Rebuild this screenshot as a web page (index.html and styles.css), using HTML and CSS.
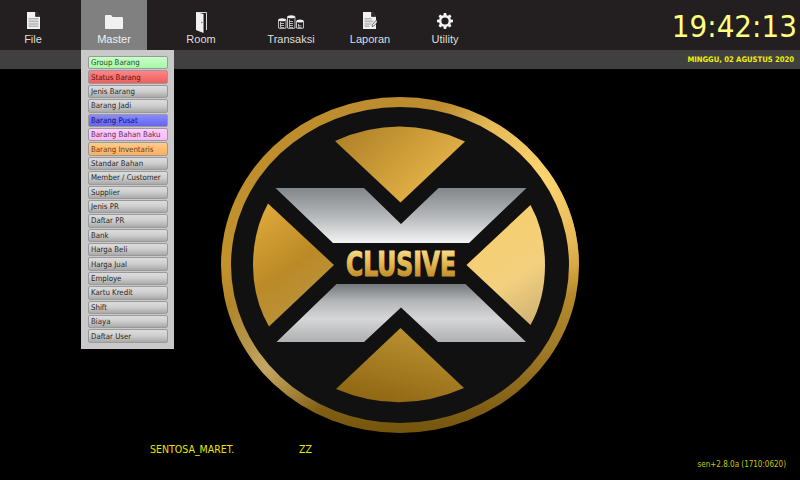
FILE: index.html
```html
<!DOCTYPE html>
<html lang="id">
<head>
<meta charset="utf-8">
<title>Xclusive</title>
<link rel="stylesheet" href="styles.css">
</head>
<body>
<div class="app">
  <header class="topbar">
    <nav class="nav">
      <a class="nav-item w-file">
        <div class="slot"><svg viewBox="0 0 13 17" width="13" height="17"><path class="ic" d="M0 0h8.500l4.500 4.500V17H0z"/><path class="cut" d="M8.500 0v4.500H13"/><path class="ln" d="M1.500 6h10v1.600h-10zM1.500 8.600h10v1.600h-10zM1.500 11.200h10v1.600h-10zM1.500 13.600h10v1.400h-10z"/></svg></div>
        <span>File</span>
      </a>
      <a class="nav-item w-master active">
        <div class="slot"><svg viewBox="0 0 18 14" width="18" height="14"><path class="ic" d="M0 1.200Q0 0 1 0h5l1.500 2H17q1 0 1 1v10q0 1-1 1H1q-1 0-1-1z"/></svg></div>
        <span>Master</span>
      </a>
      <a class="nav-item w-room">
        <div class="slot"><svg class="door" viewBox="0 0 11 21" width="11" height="21"><path class="frame" d="M.5.500h10v17.500"/><path class="ic" d="M0 0l7.500 2V21L0 18z"/><circle class="knob" cx="5.800" cy="10.500" r=".7"/></svg></div>
        <span>Room</span>
      </a>
      <a class="nav-item w-trans">
        <div class="slot"><svg viewBox="0 0 26 14.500" width="26" height="14.500"><g class="db"><path d="M.5 4.800v8.200q3.700 1.600 7.500 0V4.800"/><path d="M9.500 1.700v11.300q3.700 1.600 7.500 0V1.700"/><path d="M18.500 6v7q3.500 1.500 7 0V6"/></g><ellipse class="ic" cx="4.200" cy="4.800" rx="3.800" ry="1.500"/><ellipse class="ic" cx="13.200" cy="1.700" rx="3.800" ry="1.500"/><ellipse class="ic" cx="22" cy="6" rx="3.500" ry="1.500"/><path class="ln-w" d="M2.500 7v5.500h3.500M2.500 8.500h3.500M2.500 10.500h3.500M11.500 4.500v8h3.500M11.500 6.500h3.500M11.500 8.500h3.500M11.500 10.500h3.500M20.500 9v3.500h3M20.500 10.800h3"/></svg></div>
        <span>Transaksi</span>
      </a>
      <a class="nav-item w-lapor">
        <div class="slot"><svg viewBox="0 0 14 17" width="14" height="17"><path class="ic" d="M0 0h8.500l4.500 4.500V17H0z"/><path class="cut" d="M8.500 0v4.500H13"/><path class="ln" d="M1.500 6h7v1.600h-7zM1.500 8.600h9v1.600h-9zM1.500 11.200h7v1.600h-7zM1.500 13.600h5v1.400h-5z"/><path class="pencil" d="M14 7.500L9.500 12.500 9 14.500 11 14 14 10.500z"/></svg></div>
        <span>Laporan</span>
      </a>
      <a class="nav-item w-util">
        <div class="slot"><svg viewBox="0 0 20 20" width="16" height="16"><path class="gear" d="M8.500 0h3l.5 2.700 1.700.7 2.300-1.500 2.100 2.100-1.500 2.300.7 1.700 2.700.5v3l-2.700.5-.7 1.700 1.500 2.300-2.100 2.100-2.300-1.500-1.700.7-.5 2.700h-3l-.5-2.700-1.700-.7-2.300 1.500-2.100-2.100 1.500-2.300-.7-1.700L0 11.500v-3l2.700-.5.7-1.700-1.500-2.300L4 1.900l2.300 1.500 1.700-.7zM10 5.500a4.500 4.500 0 1 0 0 9 4.500 4.500 0 0 0 0-9z"/></svg></div>
        <span>Utility</span>
      </a>
    </nav>
    <div class="clock">19:42:13</div>
  </header>
  <div class="subbar"><span class="date">MINGGU, 02 AGUSTUS 2020</span></div>
  <main class="stage">
    <svg class="logo" viewBox="0 0 360 338" width="360" height="338">
      <defs>
        <linearGradient id="ring" x1="0" y1="0" x2="0" y2="1">
          <stop offset="0" stop-color="#bc8c2e"/>
          <stop offset=".5" stop-color="#c2922c"/>
          <stop offset=".75" stop-color="#a07a28"/>
          <stop offset="1" stop-color="#74550c"/>
        </linearGradient>
        <radialGradient id="hiR" gradientUnits="userSpaceOnUse" cx="315" cy="85" r="120">
          <stop offset="0" stop-color="#ffd873" stop-opacity="1"/>
          <stop offset=".6" stop-color="#f5cb68" stop-opacity=".7"/>
          <stop offset="1" stop-color="#f5cb68" stop-opacity="0"/>
        </radialGradient>
        <radialGradient id="hiL" gradientUnits="userSpaceOnUse" cx="45" cy="270" r="70">
          <stop offset="0" stop-color="#c9ad6a" stop-opacity=".9"/>
          <stop offset="1" stop-color="#c9ad6a" stop-opacity="0"/>
        </radialGradient>
        <linearGradient id="wTop" gradientUnits="userSpaceOnUse" x1="130" y1="30" x2="210" y2="115">
          <stop offset="0" stop-color="#b08228"/><stop offset="1" stop-color="#ecb94b"/>
        </linearGradient>
        <linearGradient id="wLeft" gradientUnits="userSpaceOnUse" x1="30" y1="110" x2="115" y2="230">
          <stop offset="0" stop-color="#e3ac3d"/><stop offset=".5" stop-color="#bb8a26"/><stop offset="1" stop-color="#b89a4c"/>
        </linearGradient>
        <linearGradient id="wRight" gradientUnits="userSpaceOnUse" x1="250" y1="110" x2="325" y2="230">
          <stop offset="0" stop-color="#f6cd65"/><stop offset=".6" stop-color="#f3d07f"/><stop offset="1" stop-color="#c8ae70"/>
        </linearGradient>
        <linearGradient id="wBot" gradientUnits="userSpaceOnUse" x1="190" y1="235" x2="170" y2="312">
          <stop offset="0" stop-color="#b98f30"/><stop offset="1" stop-color="#8f6612"/>
        </linearGradient>
        <linearGradient id="sTop" gradientUnits="userSpaceOnUse" x1="0" y1="92" x2="0" y2="147">
          <stop offset="0" stop-color="#81868a"/><stop offset=".55" stop-color="#b9bbbd"/><stop offset="1" stop-color="#f4f4f4"/>
        </linearGradient>
        <linearGradient id="sBot" gradientUnits="userSpaceOnUse" x1="0" y1="188" x2="0" y2="246">
          <stop offset="0" stop-color="#75787c"/><stop offset=".3" stop-color="#b4b6b8"/><stop offset=".6" stop-color="#d6d6d7"/><stop offset="1" stop-color="#aeb0b2"/>
        </linearGradient>
        <linearGradient id="txt" gradientUnits="userSpaceOnUse" x1="0" y1="154" x2="0" y2="180">
          <stop offset="0" stop-color="#f7dc87"/><stop offset=".55" stop-color="#e2b54d"/><stop offset="1" stop-color="#c0902a"/>
        </linearGradient>
      </defs>
      <ellipse cx="180" cy="169" rx="179" ry="168" fill="url(#ring)"/>
      <ellipse cx="180" cy="169" rx="179" ry="168" fill="url(#hiR)"/>
      <ellipse cx="180" cy="169" rx="179" ry="168" fill="url(#hiL)"/>
      <ellipse cx="180" cy="169" rx="169" ry="158" fill="#111"/>
      <path fill="url(#wTop)" d="M115 45Q180 16 245 45.500L180.500 106.500z"/>
      <path fill="url(#wLeft)" d="M48 107.500Q33 135 33 169T49 230.500L114 169z"/>
      <path fill="url(#wRight)" d="M310.500 109Q325 135 325 169T310.500 229L246.500 169z"/>
      <path fill="url(#wBot)" d="M180.500 232L244 292Q180 320 116 293z"/>
      <path fill="url(#sTop)" d="M55.500 92H144L181 128 218.500 92H306.500L249 147H113z"/>
      <path fill="url(#sBot)" d="M116.500 188H245.500L306 246H218L181 211.500 144 246H56.500z"/>
      <text class="logo-text" x="181" y="179.500" text-anchor="middle" textLength="110" lengthAdjust="spacingAndGlyphs" fill="url(#txt)" stroke="url(#txt)">CLUSIVE</text>
    </svg>
    <div class="foot">
      <div class="tenant"><span class="t-name">SENTOSA_MARET.</span><span class="t-code">ZZ</span></div>
      <div class="version">sen+2.8.0a (1710:0620)</div>
    </div>
  </main>
  <div class="menu">
    <button class="mi green">Group Barang</button>
    <button class="mi red">Status Barang</button>
    <button class="mi">Jenis Barang</button>
    <button class="mi">Barang Jadi</button>
    <button class="mi blue">Barang Pusat</button>
    <button class="mi pink">Barang Bahan Baku</button>
    <button class="mi orange">Barang Inventaris</button>
    <button class="mi">Standar Bahan</button>
    <button class="mi">Member / Customer</button>
    <button class="mi">Supplier</button>
    <button class="mi">Jenis PR</button>
    <button class="mi">Daftar PR</button>
    <button class="mi">Bank</button>
    <button class="mi">Harga Beli</button>
    <button class="mi">Harga Jual</button>
    <button class="mi">Employe</button>
    <button class="mi">Kartu Kredit</button>
    <button class="mi">Shift</button>
    <button class="mi">Biaya</button>
    <button class="mi">Daftar User</button>
  </div>
</div>
</body>
</html>
```
FILE: styles.css
```css
* { box-sizing: border-box; }
html, body { margin: 0; padding: 0; height: 100%; background: #000; overflow: hidden; }
.app { position: relative; width: 800px; height: 480px; display: flex; flex-direction: column; font-family: "Liberation Sans", Arial, sans-serif; }

.topbar { height: 50px; background: #231f20; display: flex; justify-content: space-between; }
.nav { display: flex; }
.nav-item { width: 66px; height: 50px; display: flex; flex-direction: column; align-items: center; justify-content: flex-end; padding-bottom: 4px; color: #dedede; font-size: 11px; line-height: 14px; }
.nav-item.active { background: #808080; color: #f0f0f0; }
.slot { height: 21px; margin-bottom: 3px; display: flex; align-items: flex-end; justify-content: center; }
.slot svg { display: block; flex: none; }
.door { margin-bottom: -4px; }
.w-master { margin-left: 15px; }
.w-room { margin-left: 21px; }
.w-trans { margin-left: 24px; }
.w-lapor { margin-left: 13px; }
.w-util { margin-left: 9px; }
.ic { fill: #f1f1f1; }
.cut { fill: #231f20; stroke: #231f20; stroke-width: .6; }
.ln { fill: #b4b4b4; }
.ln-w { stroke: #d8d8d8; stroke-width: .8; fill: none; }
.db path { fill: #231f20; stroke: #e6e6e6; stroke-width: .8; }
.frame { fill: none; stroke: #d8d8d8; stroke-width: 1; }
.knob { fill: #666; }
.pencil { fill: #f1f1f1; stroke: #231f20; stroke-width: .6; }
.gear { fill: #f4f4f4; fill-rule: evenodd; }

.clock { color: #ffff80; font-family: "DejaVu Sans", sans-serif; font-stretch: condensed; font-size: 31px; line-height: 52px; padding-right: 3px; height: 50px; }
.subbar { height: 19px; background: #404040; display: flex; justify-content: flex-end; align-items: center; padding-right: 6px; }
.date { color: #f2f200; font-family: "DejaVu Sans", sans-serif; font-stretch: condensed; font-weight: bold; font-size: 7.600px; line-height: 19px; }

.stage { flex: 1; background: #000; display: flex; flex-direction: column; align-items: center; padding-top: 27px; }
.logo { display: block; flex: none; }
.logo-text { font-family: "DejaVu Sans", sans-serif; font-weight: bold; font-size: 33px; stroke-width: 1.2; }
.foot { flex: 1; align-self: stretch; display: flex; justify-content: space-between; align-items: flex-end; padding: 0 14px 10px 150px; }
.tenant { color: #e6e600; font-size: 10.500px; line-height: 13px; display: flex; margin-bottom: 14px; font-family: "DejaVu Sans", sans-serif; font-stretch: condensed; }
.t-name { width: 84px; margin-right: 65px; overflow: hidden; white-space: nowrap; }
.version { color: #c8c800; font-size: 8px; line-height: 11px; font-family: "DejaVu Sans", sans-serif; font-stretch: condensed; }

.menu { position: absolute; left: 81px; top: 50px; width: 93px; height: 299px; background: #c9c9c9; padding: 6px 6px 0 7px; display: flex; flex-direction: column; gap: 1px; }
.mi { display: block; flex: none; width: 80px; height: 13.400px; padding: 0 0 0 2px; margin: 0; border: 1px solid #9a9a9a; border-radius: 2px; background: linear-gradient(#dcdcdc, #d0d0d0 45%, #a9a9a9); color: #262626; font-family: "DejaVu Sans", sans-serif; font-stretch: condensed; font-size: 7.800px; line-height: 11px; text-align: left; white-space: nowrap; }
.green { background: linear-gradient(#c8ffc8, #a8f8a8); color: #245024; }
.red { background: linear-gradient(#ff8484, #ee5f5f); color: #5c1212; }
.blue { background: linear-gradient(#8a8aff, #6464f0); color: #10105c; }
.pink { background: linear-gradient(#ffd0ff, #fbb8fb); color: #503050; }
.orange { background: linear-gradient(#ffcb8c, #ffaf62); color: #5e4018; }
```
